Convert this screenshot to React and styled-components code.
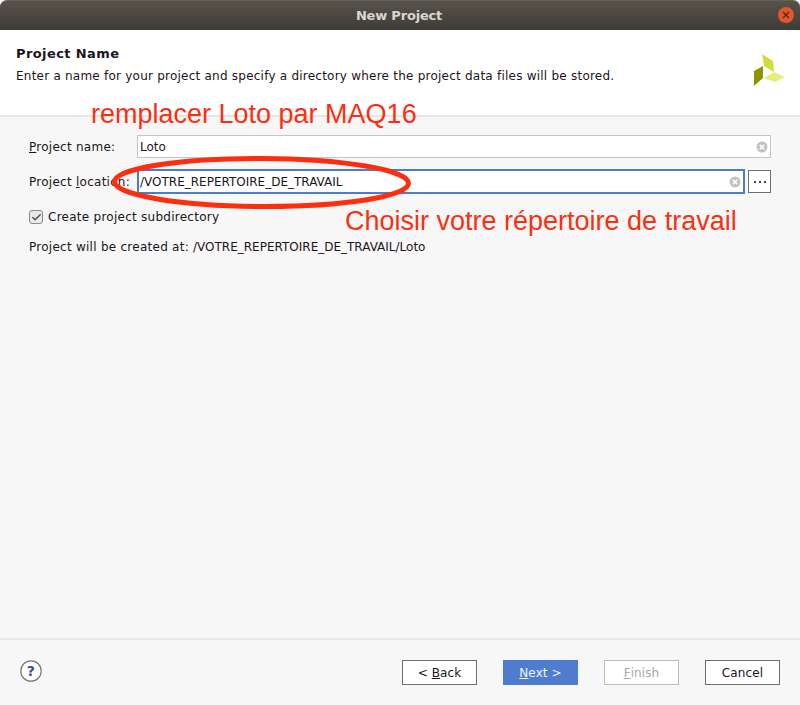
import React from "react";
import styled, { createGlobalStyle } from "styled-components";
import { Check } from "lucide-react";

const Global = createGlobalStyle`
	html, body {
		margin: 0;
		padding: 0;
		background: #f7f7f7;
	}
	* {
		box-sizing: border-box;
	}
`;

const Window = styled.div`
	position: relative;
	width: 800px;
	height: 705px;
	display: flex;
	flex-direction: column;
	overflow: hidden;
	background: #f7f7f7;
	color: #1c1420;
	font-family: "DejaVu Sans", sans-serif;
	font-size: 12px;
	letter-spacing: 0.26px;
`;

const TitleBar = styled.div`
	position: relative;
	height: 30px;
	flex: none;
	display: flex;
	align-items: center;
	justify-content: center;
	border-radius: 7px 7px 0 0;
	border-top: 1px solid #65625a;
	background: linear-gradient(#57534b, #3f3c36);
	color: #d8d6d0;
	font-size: 13px;
	font-weight: bold;
	letter-spacing: -0.2px;
	padding-right: 2px;
`;

const CloseButton = styled.div`
	position: absolute;
	top: 6px;
	right: 6px;
	width: 16px;
	height: 16px;
	border-radius: 50%;
	background: #e2562a;
	display: flex;
	align-items: center;
	justify-content: center;
`;

const Header = styled.div`
	height: 87px;
	flex: none;
	display: flex;
	justify-content: space-between;
	padding: 16px 14px 0 16px;
	background: #fff;
	border-bottom: 2px solid #e6e6e6;
`;

const HeaderTitle = styled.div`
	font-size: 13px;
	font-weight: bold;
	line-height: 16px;
	letter-spacing: 0.4px;
`;

const HeaderText = styled.div`
	margin-top: 7px;
	line-height: 15px;
	letter-spacing: 0.23px;
`;

const LogoBox = styled.div`
	margin-top: 8px;
`;

const Form = styled.div`
	flex: 1;
	display: flex;
	flex-direction: column;
	padding: 18px 29px 0;
`;

const Row = styled.div`
	display: flex;
	align-items: center;
	height: ${(props) => props.$height}px;
	margin-bottom: ${(props) => props.$gap || 0}px;
`;

const Label = styled.div`
	width: 108px;
	flex: none;
	white-space: nowrap;
`;

const Field = styled.div`
	flex: 1;
	height: 100%;
	display: flex;
	align-items: center;
	justify-content: space-between;
	padding: 0 2px 0 ${(props) => (props.$active ? 1 : 2)}px;
	background: #fff;
	letter-spacing: 0;
	border: ${(props) => (props.$active ? "2px solid #4c7ccc" : "1px solid #c4c4c4")};
`;

const Path = styled.span`
	letter-spacing: 0;
	white-space: pre;
`;

const BrowseButton = styled.div`
	width: 23px;
	height: 23px;
	margin-left: 3px;
	flex: none;
	border: 1px solid #6e6e6e;
	background: #fff;
	display: flex;
	align-items: center;
	justify-content: center;
	gap: 3px;
`;

const Dot = styled.span`
	width: 2px;
	height: 2px;
	background: #444;
`;

const CheckBox = styled.div`
	width: 14px;
	height: 14px;
	margin-right: 5px;
	border: 1px solid #8a8a8a;
	border-radius: 3px;
	background: #e9e9e9;
	display: flex;
	align-items: center;
	justify-content: center;
`;

const Footer = styled.div`
	height: 67px;
	flex: none;
	display: flex;
	align-items: flex-start;
	padding: 20px 20px 0;
	border-top: 2px solid #e8e8e8;
`;

const Buttons = styled.div`
	margin-left: auto;
	display: flex;
	gap: 26px;
`;

const Button = styled.div`
	width: 75px;
	height: 25px;
	display: flex;
	align-items: center;
	justify-content: center;
	letter-spacing: 0.1px;
	background: ${(props) => (props.$primary ? "#4f7ccf" : "#fff")};
	border: 1px solid ${(props) =>
		props.$primary ? "#4f7ccf" : props.$disabled ? "#bdbdbd" : "#6e6e6e"};
	color: ${(props) => (props.$primary ? "#f2f4fa" : props.$disabled ? "#a8a4ad" : "#1c1420")};
`;

const Note = styled.div`
	position: absolute;
	color: #fb2f10;
	font-family: "Liberation Sans", sans-serif;
	font-size: 27px;
	line-height: 30px;
	letter-spacing: 0;
	white-space: nowrap;
	top: ${(props) => props.$top}px;
	left: ${(props) => props.$left}px;
`;

const Ellipse = styled.svg`
	position: absolute;
	left: 105px;
	top: 150px;
`;

const ClearIcon = () => (
	<svg width="12" height="12" viewBox="0 0 12 12">
		<circle cx="6" cy="6" r="5.5" fill="#c2c2c2" />
		<path d="M3.8 3.8l4.4 4.4M8.2 3.8L3.8 8.2" stroke="#fff" strokeWidth="1.6" />
	</svg>
);

const Logo = () => (
	<svg width="32" height="33" viewBox="0 0 32 33">
		<path d="M8 0L19 7L20 18L10 12z" fill="#d4dc3a" />
		<path d="M10 24L20 18L31 23L21 28z" fill="#e6ec80" />
		<path d="M0 17L9 12V24L0 32z" fill="#8c9400" />
	</svg>
);

const HelpIcon = () => (
	<svg width="22" height="22" viewBox="0 0 22 22">
		<circle cx="11" cy="11" r="10.2" fill="#fff" stroke="#777" strokeWidth="1.2" />
		<text
			x="11"
			y="16"
			textAnchor="middle"
			fontFamily="DejaVu Sans"
			fontWeight="bold"
			fontSize="14"
			fill="#2f4f96"
		>
			?
		</text>
	</svg>
);

const App = () => {
	return (
		<Window>
			<Global />
			<TitleBar>
				New Project
				<CloseButton>
					<svg width="8" height="8" viewBox="0 0 8 8">
						<path d="M1 1l6 6M7 1L1 7" stroke="#4a2a1c" strokeWidth="1.2" />
					</svg>
				</CloseButton>
			</TitleBar>
			<Header>
				<div>
					<HeaderTitle>Project Name</HeaderTitle>
					<HeaderText>
						Enter a name for your project and specify a directory where the project data files
						will be stored.
					</HeaderText>
				</div>
				<LogoBox>
					<Logo />
				</LogoBox>
			</Header>
			<Form>
				<Row $height={23} $gap={11}>
					<Label>
						<u>P</u>roject name:
					</Label>
					<Field>
						Loto
						<ClearIcon />
					</Field>
				</Row>
				<Row $height={25} $gap={15}>
					<Label>
						Project <u>l</u>ocation:
					</Label>
					<Field $active>
						/VOTRE_REPERTOIRE_DE_TRAVAIL
						<ClearIcon />
					</Field>
					<BrowseButton>
						<Dot />
						<Dot />
						<Dot />
					</BrowseButton>
				</Row>
				<Row $height={16} $gap={14}>
					<CheckBox>
						<Check size={11} strokeWidth={3.5} color="#555" />
					</CheckBox>
					Create project subdirectory
				</Row>
				<Row $height={16}>
					Project will be created at:&nbsp;<Path>/VOTRE_REPERTOIRE_DE_TRAVAIL/Loto</Path>
				</Row>
			</Form>
			<Footer>
				<HelpIcon />
				<Buttons>
					<Button>
						&lt;&nbsp;<u>B</u>ack
					</Button>
					<Button $primary>
						<u>N</u>ext&nbsp;&gt;
					</Button>
					<Button $disabled>
						<u>F</u>inish
					</Button>
					<Button>Cancel</Button>
				</Buttons>
			</Footer>
			<Note $top={99} $left={91}>
				remplacer Loto par MAQ16
			</Note>
			<Note $top={206} $left={345}>
				Choisir votre répertoire de travail
			</Note>
			<Ellipse width="320" height="70" viewBox="0 0 320 70">
				<ellipse
					cx="156.5"
					cy="32.5"
					rx="147"
					ry="24"
					fill="none"
					stroke="#fb2f10"
					strokeWidth="5"
					transform="rotate(0.3 156.5 32.5)"
				/>
			</Ellipse>
		</Window>
	);
};

export default App;
